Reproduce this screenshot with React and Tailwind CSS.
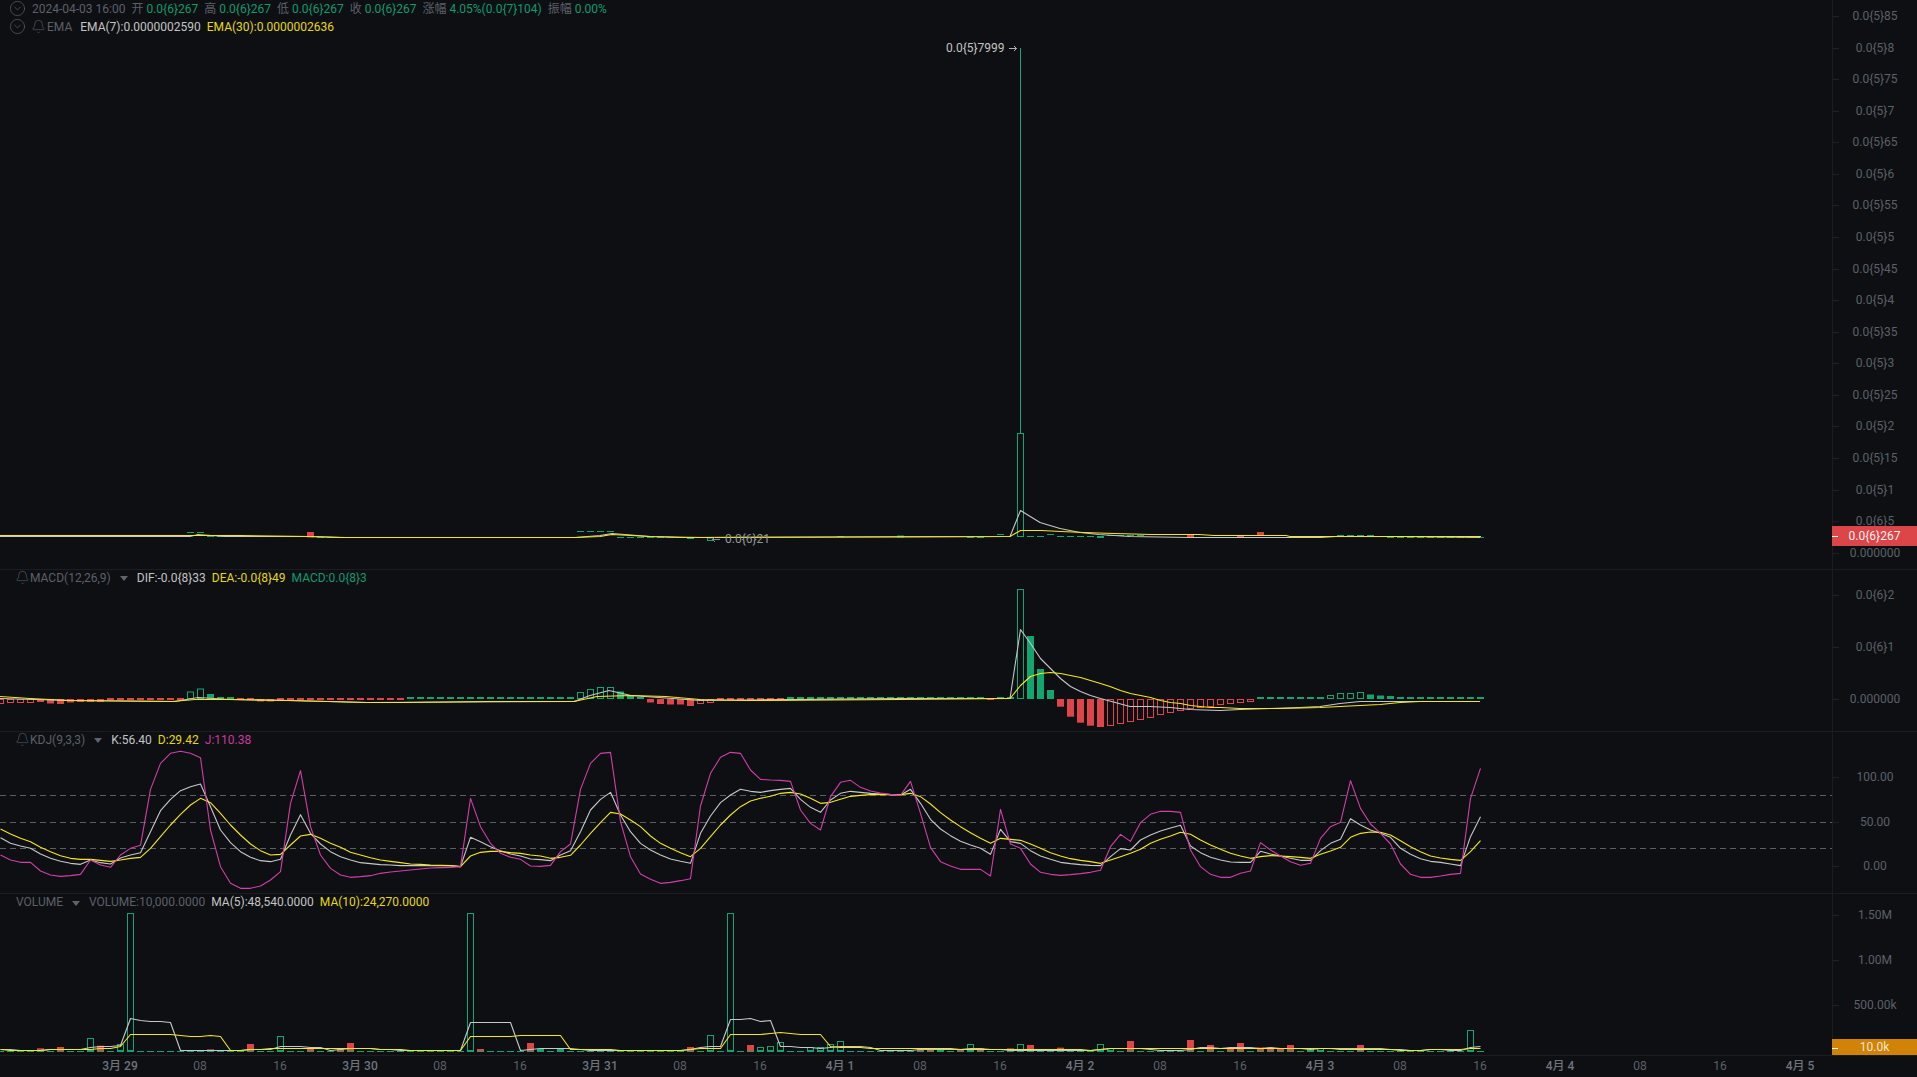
import React from 'react';
import { Bell, CircleChevronDown } from 'lucide-react';

const GREEN = '#12a56f';
const RED = '#dd4548';
const YELLOW = '#f7e81a';
const WHITE = '#c8c8c8';
const PINK = '#d33eac';

// bar index -> x in the page, one bar every 10px
const barX = (i) => 10 * i + 0.5;
const range = (a, b) => Array.from({ length: b - a + 1 }, (_, k) => a + k);

// y values read off the picture per bar, 720 + v / 3 gives page y
const kdjJ = [405,420,427,427,453,465,469,467,463,420,435,442,405,385,376,208,130,100,94,100,113,330,440,490,505,505,498,480,455,250,152,320,405,445,465,472,470,467,460,456,453,450,447,444,443,442,440,235,320,370,400,412,418,438,439,436,395,372,208,130,100,97,305,410,462,478,490,487,482,476,258,160,112,97,100,150,178,180,181,184,270,310,330,230,187,181,202,213,219,223,226,184,280,382,425,438,448,448,448,468,268,372,385,432,457,463,466,464,461,457,451,380,343,364,308,283,274,274,277,390,440,463,472,472,460,453,368,390,408,425,436,430,355,320,307,182,265,312,340,372,432,463,472,472,468,463,460,235,145];
const kdjK = [353,370,378,385,402,415,424,430,433,420,428,432,414,405,398,335,272,238,212,200,192,260,330,368,395,412,422,425,418,345,284,340,372,395,410,420,428,431,434,435,437,437,437,437,437,437,440,352,365,380,392,402,408,417,419,422,405,392,335,270,238,217,285,335,370,390,405,417,424,430,340,288,248,225,208,214,217,212,208,205,238,262,277,240,220,214,217,220,222,224,225,208,250,298,327,347,364,375,385,403,328,365,370,392,408,418,427,431,434,436,437,410,386,390,360,345,333,324,316,378,398,412,420,426,427,427,394,402,408,415,421,421,392,370,358,296,315,330,340,352,385,403,416,424,427,432,437,350,290];
const kdjD = [327,342,355,365,382,395,407,415,418,418,421,424,420,415,412,385,350,315,283,255,235,248,280,315,345,372,392,405,403,375,348,343,355,370,382,397,405,413,420,424,428,432,433,435,436,437,440,408,397,394,394,398,400,405,408,415,412,406,375,340,308,277,282,300,320,348,370,385,398,410,385,350,315,285,260,243,235,229,220,217,222,235,250,247,238,229,226,224,224,224,224,220,230,252,278,300,320,338,355,370,355,358,361,372,385,398,408,416,421,425,430,420,410,400,388,370,358,348,337,343,360,375,388,400,408,415,410,407,408,410,412,415,403,393,382,352,340,336,337,345,362,380,395,408,414,418,421,395,362];

// [bar, top] for volume, 890 + v / 3 gives page y
const volGreen = [[9,445],[12,463],[13,70],[28,439],[47,70],[54,477],[56,477],[71,436],[73,70],[76,472],[77,469],[78,458],[81,473],[82,473],[83,463],[84,455],[94,475],[97,463],[102,463],[110,463],[111,475],[131,475],[132,475],[147,420]];
const volRed = [[4,475],[6,471],[10,467],[21,478],[25,462],[31,473],[34,477],[35,459],[48,477],[53,459],[69,471],[75,465],[92,475],[93,475],[96,478],[98,475],[101,475],[103,465],[106,473],[113,453],[119,450],[121,465],[123,473],[124,459],[126,473],[127,473],[128,477],[129,465],[136,465]];
const volMa5 = [478,479,481,481,480,479,478,478,478,473,469,469,467,385,390,393,394,398,482,482,482,482,482,482,480,477,478,477,470,468,469,472,473,481,478,476,476,476,477,479,481,481,481,481,481,482,482,398,397,397,397,397,482,479,476,475,475,475,477,480,481,481,482,482,481,481,481,481,480,477,473,468,468,388,388,385,393,390,468,470,472,473,474,471,468,468,470,473,480,482,482,480,478,477,477,478,478,476,476,477,478,480,481,480,480,481,481,482,482,481,478,476,476,475,476,478,480,481,482,478,473,473,474,472,472,473,474,473,475,475,476,477,476,475,475,475,476,476,476,478,479,481,481,479,479,480,481,472,470];
const volMa10 = [478,480,482,482,480,479,478,478,478,477,476,476,470,433,433,433,433,433,436,438,438,437,438,482,481,478,478,476,474,474,474,474,474,474,474,474,475,476,477,478,479,480,481,481,481,482,482,439,439,439,439,439,437,436,436,436,436,478,479,479,479,479,480,481,482,482,482,482,481,479,476,475,474,433,433,433,432,430,428,431,433,433,433,470,471,472,473,475,475,475,475,475,476,476,476,476,477,477,477,477,477,477,477,478,478,478,478,478,479,480,478,476,476,476,475,475,475,475,475,475,474,474,474,474,474,474,475,475,475,475,475,475,476,476,477,477,477,478,478,478,480,481,480,479,478,478,478,476,475];

const mainWhite = '0,536 75,536.3 190,536 198,534.2 225,536 310,536.5 340,537.8 490,537.8 575,537.5 600,535 612,533.5 650,536 680,537.3 1010,536.8 1020.5,510.7 1040,522 1060,528.3 1080,532.3 1099,534.3 1130,536 1190,537 1321,537 1336,536 1400,536.6 1480,537';
const mainYellow = '0,535.3 190,535.5 198,535 240,535.5 310,536.3 345,537 490,537.3 575,537.3 600,536 612,534.8 650,536.3 700,537 1010,536.8 1020.5,530.3 1041,530.3 1061,531.3 1084,532.3 1114,533.3 1152,534 1199,534.3 1214,535.3 1286,535.3 1290,536.3 1481,536.7';
const macdWhite = '0,698 70,700.5 175,701 198,697.5 230,699 290,700 367,702 574,701 590,695 609,690.5 631,695 700,700 900,698.7 1010,698.7 1020.5,629.3 1030.5,643.3 1040.5,658.3 1050.5,668.3 1060.5,678.3 1070.5,686.7 1080.5,691.7 1090.5,695 1100.5,698.3 1130,706.5 1150,706.7 1170,707.5 1190,709.3 1220,710.3 1240,709.5 1270,708 1300,707.3 1320,706 1340,703.7 1360,701.5 1380,701 1400,701.7 1480,701.3';
const macdYellow = '0,696.7 30,698.3 70,700 172,701.3 195,699 230,699 287,700.3 367,702.7 402,702.7 488,701.7 574,701 597,696.7 631,695.3 666,696.7 700,699.3 746,700.3 900,699.3 1010,698.7 1020.5,685 1030.5,676 1040.5,673.3 1050.5,672.3 1060.5,673.3 1070.5,675 1080.5,677.7 1090.5,680.7 1100.5,683.3 1110,686.7 1120.5,690 1130.5,693.3 1140.5,695.7 1150.5,697.7 1160.5,700 1170.5,702 1180.5,703.7 1190.5,705 1200.5,706 1210.5,707 1220.5,707.7 1240,708.7 1280,708.3 1320,707 1340,706.3 1360,705.3 1380,704 1400,702.3 1420,701.7 1480,701.3';

// main pane small bars: [bar, y, colour]
const mainDashes = [
  [4,536.5,RED],[5,536.5,GREEN],[6,536.5,RED],[7,536.5,GREEN],[19,532.5,GREEN],[20,532.5,GREEN],[21,536.5,GREEN],[22,536.5,GREEN],[23,536.5,GREEN],[24,536.5,GREEN],[32,537.5,GREEN],[33,537.5,GREEN],
  [58,531.5,GREEN],[59,531.5,GREEN],[60,531.5,GREEN],[61,531.5,GREEN],[62,537.5,GREEN],[63,537.5,GREEN],[64,537.5,GREEN],[65,537.5,GREEN],[66,537.5,GREEN],[67,537.5,GREEN],[84,536.5,GREEN],
  [97,537.5,GREEN],[98,537.5,GREEN],[100,534.5,GREEN],[105,534.5,GREEN],[103,536.5,GREEN],[104,536.5,GREEN],[106,536.5,GREEN],[107,536.5,GREEN],[108,536.5,GREEN],[109,536.5,GREEN],
  [111,535.5,GREEN],[112,535.5,GREEN],[113,535.5,GREEN],[114,535.5,GREEN],[134,535.5,GREEN],[135,535.5,GREEN],[136,535.5,GREEN],[137,535.5,GREEN],
  ...range(139, 148).map((i) => [i, 537.5, GREEN]),
];
const mainFilled = [[31,532,537.5,RED],[69,537.5,539,GREEN],[90,535.5,537.5,GREEN],[110,536,538,GREEN],[119,535,538,RED],[124,535.5,537,RED],[126,532,535.5,RED]];

// macd hollow/filled bars, zero at 698.7
const macdGreenHollow = [[19,692],[20,689],[58,692.5],[59,689.5],[60,687.5],[61,687.5],[133,695.5],[134,693.5],[135,693.5],[136,692.5],[102,589.5]];
const macdGreenFilled = [[21,694],[62,691.5],[63,695],[103,636],[104,669],[105,690],[137,694.5],[138,695.5],[139,696]];
const macdRedHollow = [[0,703.5],[1,702.5],[2,702.5],[3,702.5],[70,703.5],[71,702.5],[111,725.5],[112,723.5],[113,721.5],[114,719.5],[115,717.5],[116,714.5],[117,712.5],[118,710.5],[119,708.5],[120,707.5],[121,706.5],[122,704.5],[123,703.5],[124,702.5],[125,701.5]];
const macdRedFilled = [[4,702],[5,703.5],[6,704],[7,702.5],[8,702],[9,702],[10,702],[26,701.5],[27,701.5],[65,702.5],[66,704],[67,704.5],[68,704.5],[69,706],[106,706.7],[107,716.7],[108,722.7],[109,725.7],[110,727]];
const macdTaken = new Set([...macdGreenHollow, ...macdGreenFilled, ...macdRedHollow, ...macdRedFilled].map((b) => b[0]));
const macdRedDash = [...range(11, 18), 24, 25, ...range(28, 40), ...range(72, 78), 99];

const kdjTicks = [['100.00', 776.5], ['50.00', 821.5], ['0.00', 865.5]];
const mainTicks = ['0.0{5}85','0.0{5}8','0.0{5}75','0.0{5}7','0.0{5}65','0.0{5}6','0.0{5}55','0.0{5}5','0.0{5}45','0.0{5}4','0.0{5}35','0.0{5}3','0.0{5}25','0.0{5}2','0.0{5}15','0.0{5}1','0.0{6}5','0.000000'];
const times = [['3月 29',1],['08'],['16'],['3月 30',1],['08'],['16'],['3月 31',1],['08'],['16'],['4月 1',1],['08'],['16'],['4月 2',1],['08'],['16'],['4月 3',1],['08'],['16'],['4月 4',1],['08'],['16'],['4月 5',1]];

const poly = (arr, base) => arr.map((v, i) => `${barX(i)},${base + v / 3}`).join(' ');
// flat runs stay on one pixel row, like the canvas chart
const snap = (points) => points.split(' ').map((p) => {
  const [x, y] = p.split(',');
  return `${x},${Math.floor(Number(y)) + 0.5}`;
}).join(' ');

const Hollow = ({ i, top, bottom, color }) => (
  <rect x={barX(i) - 3} y={top} width={6} height={bottom - top} fill="none" stroke={color} strokeWidth="1" />
);
const Filled = ({ i, top, bottom, color }) => (
  <rect x={barX(i) - 3.5} y={top} width={7} height={bottom - top} fill={color} />
);
const Dash = ({ i, y, color, thick = 1 }) => (
  <line x1={barX(i) - 3.5} x2={barX(i) + 3.5} y1={y} y2={y} stroke={color} strokeWidth={thick} />
);
const Line = ({ points, color }) => (
  <polyline points={points} fill="none" stroke={color} strokeWidth="1.1" strokeLinejoin="round" />
);

const Caret = () => (
  <svg width="8" height="5" viewBox="0 0 8 5" className="mt-[2px]">
    <path d="M0 0h8L4 5z" fill="#5f636b" />
  </svg>
);

const ArrowRight = () => (
  <svg width="8" height="7" viewBox="0 0 8 7" className="inline-block align-[0px]">
    <path d="M0 3.5h7.5M5 1l2.5 2.5L5 6" fill="none" stroke="currentColor" strokeWidth="0.9" />
  </svg>
);

const ArrowLeft = () => (
  <svg width="8" height="7" viewBox="0 0 8 7" className="inline-block align-[0px]">
    <path d="M8 3.5H0.5M3 1L0.5 3.5L3 6" fill="none" stroke="currentColor" strokeWidth="0.9" />
  </svg>
);

const Pane = ({ top, height, ticks, legend, children }) => (
  <div className="relative flex shrink-0 border-b border-[#1b1d21]" style={{ height }}>
    <div className="relative flex-1">
      <svg width="1832" height={height} viewBox={`0 ${top} 1832 ${height}`} className="absolute inset-0 block">
        {children}
      </svg>
      {legend}
    </div>
    <div className="relative w-[85px] shrink-0 border-l border-[#1b1d21]">
      {ticks.map(([label, y]) => (
        <React.Fragment key={label}>
          <div className="absolute left-0 h-px w-[6px] bg-[#1f2126]" style={{ top: y - top }} />
          <div className="absolute inset-x-0 -translate-y-1/2 text-center text-[12px] leading-[14px] text-[#5c606a]" style={{ top: y - top }}>
            {label}
          </div>
        </React.Fragment>
      ))}
    </div>
  </div>
);

const App = () => (
  <div className="h-screen w-full overflow-hidden bg-[#0d0f12] font-['Roboto','Noto_Sans_CJK_SC',sans-serif] text-[12px] leading-[14px]">
    <Pane
      top={0}
      height={570}
      ticks={mainTicks.map((t, k) => [t, 16 + k * 31.57])}
      legend={
        <>
          <div className="absolute left-[9px] top-0 flex items-center gap-[6px] text-[#5c606a]">
            <CircleChevronDown size={17} strokeWidth={1} />
            <span>2024-04-03 16:00</span>
            <span>开 <span className="text-[#0f9a6b]">0.0{'{6}'}267</span></span>
            <span>高 <span className="text-[#0f9a6b]">0.0{'{6}'}267</span></span>
            <span>低 <span className="text-[#0f9a6b]">0.0{'{6}'}267</span></span>
            <span>收 <span className="text-[#0f9a6b]">0.0{'{6}'}267</span></span>
            <span>涨幅 <span className="text-[#0f9a6b]">4.05%(0.0{'{7}'}104)</span></span>
            <span>振幅 <span className="text-[#0f9a6b]">0.00%</span></span>
          </div>
          <div className="absolute left-[9px] top-[18px] flex items-center text-[#5c606a]">
            <CircleChevronDown size={17} strokeWidth={1} className="mr-[5px]" />
            <Bell size={15} strokeWidth={1} />
            <span className="ml-[1px]">EMA</span>
            <span className="ml-[8px] text-[#c4c4c4]">EMA(7):0.0000002590</span>
            <span className="ml-[6px] text-[#e6d80f]">EMA(30):0.0000002636</span>
          </div>
          <div className="absolute left-[946px] top-[41px] flex items-center gap-[4px] whitespace-nowrap text-[#c4c4c4]">0.0{'{5}'}7999 <ArrowRight /></div>
          <div className="absolute left-[712px] top-[532px] flex items-center gap-[5px] whitespace-nowrap text-[#95989e]"><ArrowLeft /> 0.0{'{6}'}21</div>
        </>
      }
    >
      {mainDashes.map(([i, y, c]) => <Dash key={`${i}-${y}`} i={i} y={y} color={c} />)}
      {mainFilled.map(([i, t, b, c]) => <Filled key={i} i={i} top={t} bottom={b} color={c} />)}
      <Hollow i={71} top={538} bottom={540.5} color={GREEN} />
      <line x1="1020.5" x2="1020.5" y1="48" y2="433" stroke={GREEN} />
      <Hollow i={102} top={433.5} bottom={536.5} color={GREEN} />
      <Line points={snap(mainWhite)} color={WHITE} />
      <Line points={snap(mainYellow)} color={YELLOW} />
    </Pane>
    <div className="pointer-events-none absolute left-[1832px] top-[526px] z-10 flex h-[20px] w-[85px] items-center justify-center bg-[#dc4649] text-[#f3f3f3]">
      <div className="absolute left-0 top-[10px] h-px w-[6px] bg-white" />
      0.0{'{6}'}267
    </div>

    <Pane
      top={570}
      height={162}
      ticks={[['0.0{6}2', 595], ['0.0{6}1', 646.5], ['0.000000', 698.5]]}
      legend={
        <div className="absolute left-[15px] top-0 flex items-center text-[#5c606a]">
          <Bell size={15} strokeWidth={1} />
          <span>MACD(12,26,9)</span>
          <span className="ml-[9px]"><Caret /></span>
          <span className="ml-[9px] text-[#c4c4c4]">DIF:-0.0{'{8}'}33</span>
          <span className="ml-[6px] text-[#e6d80f]">DEA:-0.0{'{8}'}49</span>
          <span className="ml-[6px] text-[#0f9a6b]">MACD:0.0{'{8}'}3</span>
        </div>
      }
    >
      {range(0, 148).filter((i) => !macdTaken.has(i)).map((i) => (
        macdRedDash.includes(i)
          ? <Dash key={i} i={i} y={699} color={RED} thick={2} />
          : <Dash key={i} i={i} y={698} color={GREEN} thick={2} />
      ))}
      {macdGreenHollow.map(([i, t]) => <Hollow key={i} i={i} top={t} bottom={698.5} color={GREEN} />)}
      {macdGreenFilled.map(([i, t]) => <Filled key={i} i={i} top={t} bottom={699} color={GREEN} />)}
      {macdRedHollow.map(([i, b]) => <Hollow key={i} i={i} top={699.5} bottom={b} color={RED} />)}
      {macdRedFilled.map(([i, b]) => <Filled key={i} i={i} top={699} bottom={b} color={RED} />)}
      <Line points={snap(macdWhite)} color={WHITE} />
      <Line points={snap(macdYellow)} color={YELLOW} />
    </Pane>

    <Pane
      top={732}
      height={162}
      ticks={kdjTicks}
      legend={
        <div className="absolute left-[15px] top-0 flex items-center text-[#5c606a]">
          <Bell size={15} strokeWidth={1} />
          <span>KDJ(9,3,3)</span>
          <span className="ml-[9px]"><Caret /></span>
          <span className="ml-[9px] text-[#c4c4c4]">K:56.40</span>
          <span className="ml-[6px] text-[#e6d80f]">D:29.42</span>
          <span className="ml-[6px] text-[#cb3a9e]">J:110.38</span>
        </div>
      }
    >
      {[795.5, 822.5, 848.5].map((y) => (
        <line key={y} x1="0" x2="1832" y1={y} y2={y} stroke="#5b5e64" strokeDasharray="6 4" />
      ))}
      <Line points={poly(kdjK, 720)} color={WHITE} />
      <Line points={poly(kdjD, 720)} color={YELLOW} />
      <Line points={poly(kdjJ, 720)} color={PINK} />
    </Pane>

    <Pane
      top={894}
      height={162}
      ticks={[['1.50M', 915], ['1.00M', 960], ['500.00k', 1005]]}
      legend={
        <div className="absolute left-[16px] top-[1px] flex items-center text-[#5c606a]">
          <span>VOLUME</span>
          <span className="ml-[9px]"><Caret /></span>
          <span className="ml-[9px]">VOLUME:10,000.0000</span>
          <span className="ml-[6px] text-[#c4c4c4]">MA(5):48,540.0000</span>
          <span className="ml-[6px] text-[#e6d80f]">MA(10):24,270.0000</span>
        </div>
      }
    >
      {range(0, 148).map((i) => <Dash key={i} i={i} y={1051.5} color={GREEN} />)}
      {volGreen.map(([i, t]) => <Hollow key={i} i={i} top={Math.floor(890 + t / 3) + 0.5} bottom={1050.5} color={GREEN} />)}
      {volRed.map(([i, t]) => <Filled key={i} i={i} top={890 + t / 3} bottom={1051} color={RED} />)}
      <Line points={snap(poly(volMa5, 890))} color={WHITE} />
      <Line points={snap(poly(volMa10, 890))} color={YELLOW} />
    </Pane>
    <div className="pointer-events-none absolute left-[1832px] top-[1039px] z-10 flex h-[16px] w-[85px] items-center justify-center bg-[#d08306] text-[#f0e6d0]">
      <div className="absolute left-0 top-[9px] h-px w-[6px] bg-white" />
      10.0k
    </div>

    <div className="relative h-[21px]">
      {times.map(([label, bold], k) => (
        <span
          key={k}
          className={`absolute top-[3px] -translate-x-1/2 whitespace-nowrap ${bold ? 'font-medium text-[#70747d]' : 'text-[#5c606a]'}`}
          style={{ left: 120 + k * 80 }}
        >
          {label}
        </span>
      ))}
    </div>
  </div>
);

export default App;
